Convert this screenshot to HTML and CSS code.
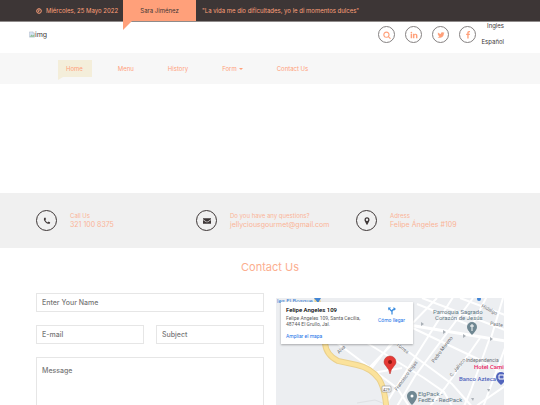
FILE: index.html
```html
<!DOCTYPE html>
<html lang="es">
<head>
<meta charset="utf-8">
<meta name="viewport" content="width=device-width, initial-scale=1">
<title>Contact Us</title>
<link rel="stylesheet" href="styles.css">
</head>
<body>
<header>
  <div class="topbar">
    <div class="container topbar-row">
      <svg class="clock" viewBox="0 0 12 12" aria-hidden="true"><circle cx="6" cy="6" r="4.6"/><path d="M6 3v3.5H4"/></svg>
      <span class="date">Miércoles, 25 Mayo 2022</span>
      <span class="ribbon">Sara Jiménez</span>
      <span class="quote">"La vida me dio dificultades, yo le di momentos dulces"</span>
    </div>
  </div>
  <div class="container brandbar">
    <a class="logo" href="#">
      <svg viewBox="0 0 16 16" aria-hidden="true"><path d="M1 1h10l4 4v10H1z" fill="#d5e3f5" stroke="#9aa5b0"/><path d="M2 14l5-6 3 3 4-4v7z" fill="#8fbf93"/><path d="M11 1v4h4" fill="#fff" stroke="#9aa5b0"/></svg>img
    </a>
    <div class="brand-tools">
      <button class="round" type="button" aria-label="Search"><svg viewBox="0 0 1792 1792"><path d="M1216 832q0-185-131.500-316.500t-316.500-131.500-316.500 131.500-131.500 316.500 131.500 316.500 316.500 131.500 316.500-131.500 131.500-316.500zm512 832q0 52-38 90t-90 38q-54 0-90-38l-343-342q-179 124-399 124-143 0-273.500-55.500t-225-150-150-225-55.500-273.500 55.500-273.500 150-225 225-150 273.500-55.500 273.500 55.500 225 150 150 225 55.500 273.500q0 220-124 399l343 343q37 37 37 90z"/></svg></button>
      <a class="round" href="#" aria-label="LinkedIn"><svg viewBox="0 0 1792 1792"><path d="M477 625v991h-330v-991h330zm21-306q1 73-50.500 122t-135.500 49h-2q-82 0-132-49t-50-122q0-74 51.500-122.500t134.500-48.500 133 48.500 51 122.500zm1166 729v568h-329v-530q0-105-40.500-164.500t-126.500-59.500q-63 0-105.500 34.500t-63.500 85.500q-11 30-11 81v553h-329q2-399 2-647t-1-296l-1-48h329v144h-2q20-32 41-56t56.500-52 87-43.500 114.500-15.500q171 0 275 113.500t104 332.500z"/></svg></a>
      <a class="round" href="#" aria-label="Twitter"><svg viewBox="0 0 1792 1792"><path d="M1684 408q-67 98-162 167 1 14 1 42 0 130-38 259.500t-115.500 248.500-184.500 210.500-258 146-323 54.500q-271 0-496-145 35 4 78 4 225 0 401-138-105-2-188-64.500t-114-159.500q33 5 61 5 43 0 85-11-112-23-185.500-111.500t-73.500-205.500v-4q68 38 146 41-66-44-105-115t-39-154q0-88 44-163 121 149 294.500 238.500t371.500 99.500q-8-38-8-74 0-134 94.500-228.500t228.500-94.500q140 0 236 102 109-21 205-78-37 115-142 178 93-10 186-50z"/></svg></a>
      <a class="round" href="#" aria-label="Facebook"><svg viewBox="0 0 1792 1792"><path d="M1343 12v264h-157q-86 0-116 36t-30 108v189h293l-39 296h-254v759h-306v-759h-255v-296h255v-218q0-186 104-288.500t277-102.500q147 0 228 12z"/></svg></a>
      <div class="langs"><a href="#">Ingles</a><a href="#">Español</a></div>
    </div>
  </div>
  <nav class="mainnav">
    <a class="active" href="#">Home</a>
    <a href="#">Menu</a>
    <a href="#">History</a>
    <a class="has-menu" href="#">Form</a>
    <a href="#">Contact Us</a>
  </nav>
</header>
<main>
  <div class="hero"></div>
  <section class="info">
    <div class="container info-grid">
      <div class="info-item">
        <span class="badge"><svg viewBox="0 0 1792 1792"><path d="M1600 1240q0 27-10 70.500t-21 68.500q-21 50-122 106-94 51-186 51-27 0-53-3.500t-57.500-12.500-47-14.500-55.500-20.500-49-18q-98-35-175-83-127-79-264-216t-216-264q-48-77-83-175-3-9-18-49t-20.500-55.500-14.500-47-12.500-57.500-3.500-53q0-92 51-186 56-101 106-122 25-11 68.500-21t70.500-10q14 0 21 3 18 6 53 76 11 19 30 54t35 63.500 31 53.500q3 4 17.500 25t21.500 35.500 7 28.500q0 20-28.500 50t-62 55-62 53-28.500 46q0 9 5 22.500t8.500 20.500 14 24 11.500 19q76 137 174 235t235 174q2 1 19 11.500t24 14 20.500 8.500 22.500 5q18 0 46-28.500t53-62 55-62 50-28.500q14 0 28.500 7t35.500 21.500 25 17.500q25 15 53.500 31t63.500 35 54 30q70 35 76 53 3 7 3 21z"/></svg></span>
        <div><p class="label">Call Us</p><p class="value">321 100 8375</p></div>
      </div>
      <div class="info-item">
        <span class="badge"><svg viewBox="0 0 16 16"><path d="M0 2.500h16v1.800L9.500 9q-1.500 1-3 0L0 4.300z"/><path d="M0 5.800l6 4.300q2 1.200 4 0l6-4.300v7.700H0z"/></svg></span>
        <div><p class="label">Do you have any questions?</p><p class="value">jellyciousgourmet@gmail.com</p></div>
      </div>
      <div class="info-item">
        <span class="badge"><svg viewBox="0 0 16 16"><path fill-rule="evenodd" d="M8 0.500a5 5 0 0 1 5 5c0 2-.6 2.700-1.200 4L9 15q-1 1.200-2 0L4.200 9.500C3.600 8.200 3 7.500 3 5.500a5 5 0 0 1 5-5zm0 2.600a2.400 2.400 0 1 0 0 4.800 2.400 2.400 0 0 0 0-4.800z"/></svg></span>
        <div><p class="label">Adress</p><p class="value">Felipe Ángeles #109</p></div>
      </div>
    </div>
  </section>
  <section class="container contact">
    <h1>Contact Us</h1>
    <div class="contact-grid">
      <form class="form">
        <input class="wide" type="text" placeholder="Enter Your Name" aria-label="Enter Your Name">
        <input type="email" placeholder="E-mail" aria-label="E-mail">
        <input type="text" placeholder="Subject" aria-label="Subject">
        <textarea class="wide" placeholder="Message" aria-label="Message"></textarea>
      </form>
      <div class="map">
        <svg class="map-art" viewBox="-1 0 228 120" preserveAspectRatio="xMinYMin slice" role="img" aria-label="Felipe Angeles 109">
          <rect x="-1" width="230" height="120" fill="#eceef1"/>
          <g fill="none" stroke="#fff" stroke-width="2">
            <path d="M120 25L228 43" stroke-width="3"/>
            <path d="M123 24l80 38 25 15M110 38l65 48 30 34M90 45l57 35 20 14 15 26M60 45l60 45 20 30"/>
            <path d="M178 -4L130 72l-26 42M196 0l-58 78-25 42M160 0l-70 72M203 40l-35 50-25 30M212 42l-18 50-12 28M228 50l-26 70M115 44L92 74M140 6l50 20"/>
            <path d="M145 0l83 32M183 0l45 17M210 -2l-18 36M226 0l-12 40M95 75l30-5M188 118l14-12 26-18"/>
            <path d="M80 105l18-3 10 4" stroke="#dfe1e4" stroke-width="1"/>
          </g>
          <path d="M40 0l8 45q1 12 13 18l19 4q14 3 22 14 7 11 8 39" fill="none" stroke="#ead08c" stroke-width="6"/>
          <path d="M40 0l8 45q1 12 13 18l19 4q14 3 22 14 7 11 8 39" fill="none" stroke="#fbe29b" stroke-width="4"/>
          <g fill="#aab0b7"><path d="M144 24l3 2-3 2zM166 32l3 2-3 2zM186 36l3 2-3 2zM213 39l3 2-3 2zM194 100l3 0-1 3zM210 91l3 0-1 3z"/></g>
          <path d="M37 0h7l-3 5z" fill="#4285d6"/>
          <circle cx="202" cy="1" r="2" fill="#4285d6"/>
          <g class="street">
            <text x="62" y="56" transform="rotate(-45 62 56)">Alva</text>
            <text x="119" y="47" transform="rotate(38 119 47)">Torres</text>
            <text x="157" y="65" transform="rotate(-53 157 65)">Pedro Moreno</text>
            <text x="120" y="93" transform="rotate(-54 120 93)">Francisco Rojas</text>
            <text x="175" y="79" transform="rotate(-51 175 79)">C. Jalisco</text>
            <text x="204" y="9" transform="rotate(28 204 9)">Hidalgo</text>
            <text x="213" y="27" transform="rotate(8 213 27)">Paste</text>
            <text x="189" y="64">Independencia</text>
          </g>
          <g class="place"><text x="156" y="16">Parroquia Sagrado</text><text x="158" y="22">Corazón de Jesús</text><text x="141" y="98">ElgPack -</text><text x="141" y="104">FedEx - RedPack</text></g>
          <text class="transit" x="0" y="5">les El Bosque</text>
          <text class="hotel" x="197" y="71">Hotel Cami</text>
          <text class="bank" x="182" y="83">Banco Azteca</text>
          <g fill="#6f8792"><path d="M195 37q-5-5-5-8a5 5 0 0 1 10 0q0 3-5 8zM135 107q-5-5-5-9a5 5 0 0 1 10 0q0 4-5 9z"/></g>
          <path d="M195 26v7M193 28h4" stroke="#fff" fill="none"/>
          <circle cx="135" cy="98" r="1.500" fill="#fff"/>
          <path d="M224 87q-5-4-5-8a5 5 0 0 1 10 0q0 4-5 8z" fill="#5265bd"/><path d="M222 77h5v4h-5z" fill="none" stroke="#fff"/>
          <path d="M113 76q-1-5-4-8-2-2-2-4a6 6 0 0 1 12 0q0 2-2 4-3 3-4 8z" fill="#e53935" stroke="#b3261e" stroke-width=".5"/><circle cx="113" cy="64" r="2" fill="#8f1710"/>
          <rect x="105" y="88" width="9" height="6" rx="1" fill="#fff" stroke="#8b8b8b" stroke-width=".6"/><text class="shield" x="106" y="93">429</text>
        </svg>
        <div class="map-card">
          <div>
            <p class="map-title">Felipe Angeles 109</p>
            <p class="map-address">Felipe Angeles 109, Santa Cecilia, 48744 El Grullo, Jal.</p>
            <a href="#">Ampliar el mapa</a>
          </div>
          <a class="route" href="#"><svg viewBox="0 0 16 16" aria-hidden="true"><path d="M8 15V9L3 4M8 9q0-4 5-5" fill="none" stroke="#3b8de0" stroke-width="2.500"/><path d="M0 1h6L1 7zM11 0l5 4-5 4z" fill="#3b8de0"/></svg>Cómo llegar</a>
        </div>
      </div>
    </div>
  </section>
</main>
</body>
</html>
```

FILE: styles.css
```css
* { box-sizing: border-box; }
html { scrollbar-width: none; }
body {
  margin: 0;
  background: #fff;
  color: #3d3636;
  font: 6px/8px Inter, "Open Sans", sans-serif;
}
p, h1 { margin: 0; font-weight: 400; }
a { color: inherit; text-decoration: none; }
.container { padding: 0 36px; }

.topbar { background: #3d3636; border-bottom: 1px solid #8f8b8a; color: #ffa07a; }
.topbar-row { display: flex; align-items: center; height: 21px; white-space: nowrap; }
.clock { width: 6px; height: 6px; margin-right: 4px; fill: none; stroke: #ffa07a; stroke-width: 2; }
.date { width: 77px; }
.ribbon {
  position: relative;
  width: 73px;
  margin-right: 6px;
  background: #ffa07a;
  color: #3d3636;
  line-height: 21px;
  text-align: center;
}
.ribbon::after {
  content: "";
  position: absolute;
  top: 100%;
  left: 0;
  border-top: 9px solid #ffa07a;
  border-right: 9px solid transparent;
}

.brandbar { display: flex; justify-content: space-between; height: 31px; padding-left: 29px; }
.logo { display: flex; align-items: center; height: 25px; font-size: 7px; }
.logo svg { width: 6px; height: 7px; }
.brand-tools { display: flex; gap: 10px; padding-top: 4px; }
.round {
  display: grid;
  place-items: center;
  width: 17px;
  height: 17px;
  padding: 0;
  border: 1px solid #858181;
  border-radius: 50%;
  background: #fff;
}
.round svg { width: 8px; height: 8px; fill: #ffa07a; }
.langs { display: flex; flex-direction: column; gap: 8px; width: 18px; margin-top: -4px; align-items: flex-end; }

.mainnav { display: flex; align-items: center; gap: 18px; height: 31px; padding: 0 58px; background: #f7f7f7; color: #ffa07a; }
.mainnav a { position: relative; padding: 0 8px; line-height: 17px; }
.mainnav .active { padding-right: 9px; background: #f4eeda; }
.active::after {
  content: "";
  position: absolute;
  top: 100%;
  left: 0;
  border-top: 3px solid #f4eeda;
  border-right: 5px solid transparent;
}
.has-menu::after {
  content: "";
  display: inline-block;
  margin-left: 2px;
  vertical-align: middle;
  border: 2px solid transparent;
  border-top-color: #ffa07a;
  border-bottom: 0;
}

.hero { height: 109px; }
.info { background: #f0f0f0; }
.info-grid { display: grid; grid-template-columns: repeat(3, 1fr); gap: 12px; }
.info-item { display: flex; align-items: center; gap: 13px; height: 55px; color: #fbb497; white-space: nowrap; }
.badge { display: grid; place-items: center; width: 21px; height: 21px; border: 1px solid #3d3636; border-radius: 50%; }
.badge svg { width: 8px; height: 8px; fill: #3d3636; }
.value { font-size: 7px; line-height: 10px; }

h1 { padding-top: 12px; color: #fcae8f; font-size: 11px; line-height: 15px; text-align: center; }
.contact-grid { display: grid; grid-template-columns: 1fr 1fr; gap: 12px; margin-top: 18px; }
.form { display: grid; grid-template-columns: 1fr 1fr; grid-template-rows: 19px 19px 60px; gap: 13px 12px; }
.wide { grid-column: 1 / -1; }
input, textarea {
  width: 100%;
  min-width: 0;
  padding: 0 5px;
  border: 1px solid #e6e6e6;
  border-radius: 0;
  background: #fff;
  color: #6c6c6c;
  font: 500 7px/10px Inter, "Liberation Sans", sans-serif;
}
textarea { padding-top: 8px; resize: none; }
::placeholder { color: #777; opacity: 1; }

.map { position: relative; height: 120px; margin-top: 5px; overflow: hidden; font-family: Roboto, sans-serif; }
.map-art { display: block; width: 100%; height: 100%; }
.map-art text { font-size: 5px; }
.street { fill: #6e7175; }
.map-art .place text { font-size: 6px; fill: #617883; }
.map-art .transit { font-size: 6px; fill: #4285d6; }
.map-art .hotel { font-size: 6px; font-weight: 500; fill: #e91e63; }
.map-art .bank { font-size: 6px; font-weight: 500; fill: #5265bd; }
.map-art .shield { font-size: 4px; fill: #555; }
.map-card {
  position: absolute;
  top: 4px;
  left: 5px;
  display: flex;
  justify-content: space-between;
  width: 132px;
  padding: 4px 8px 4px 5px;
  background: #fff;
  box-shadow: 0 1px 2px rgba(0, 0, 0, .3);
  color: #5b5b5b;
  font-size: 5px;
  line-height: 6px;
}
.map-title { color: #000; font-size: 6px; font-weight: 500; line-height: 8px; }
.map-address { width: 80px; margin: 1px 0 5px; }
.map-card a { display: block; line-height: 8px; color: #1a73e8; }
.route { padding-top: 1px; white-space: nowrap; text-align: center; }
.route svg { display: block; width: 8px; height: 8px; margin: 0 auto 1px; }
```
